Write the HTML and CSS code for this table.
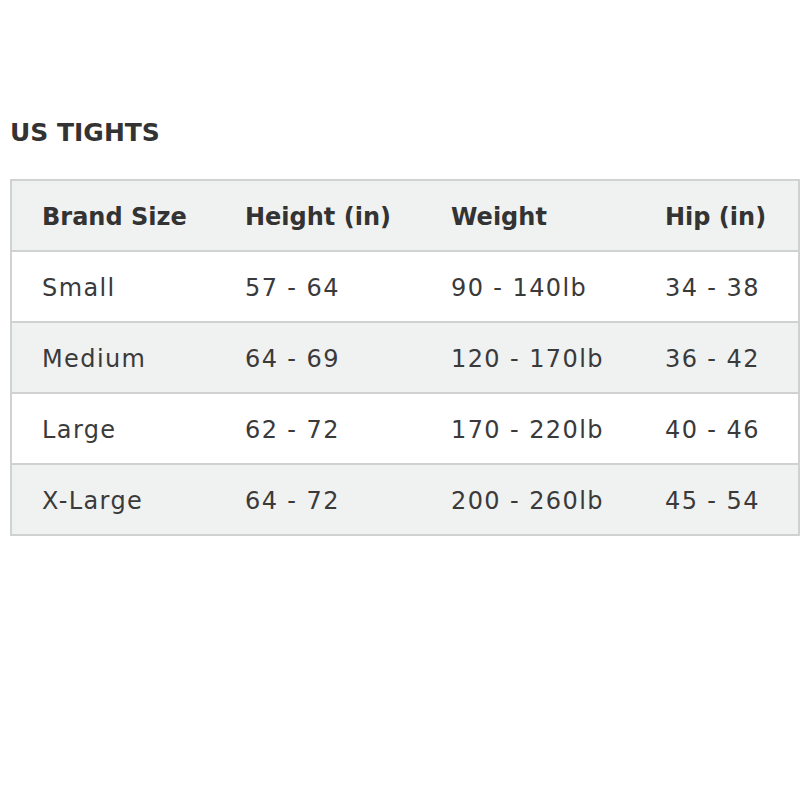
FILE: index.html
```html
<!DOCTYPE html>
<html>
<head>
<meta charset="utf-8">
<link rel="stylesheet" href="styles.css">
</head>
<body>
<div class="wrap">
  <h2 class="title">US TIGHTS</h2>
  <table class="chart">
    <colgroup>
      <col class="c1"><col class="c2"><col class="c3"><col class="c4">
    </colgroup>
    <thead>
      <tr class="alt"><th>Brand Size</th><th>Height (in)</th><th>Weight</th><th>Hip (in)</th></tr>
    </thead>
    <tbody>
      <tr><td>Small</td><td>57 - 64</td><td>90 - 140lb</td><td>34 - 38</td></tr>
      <tr class="alt"><td>Medium</td><td>64 - 69</td><td>120 - 170lb</td><td>36 - 42</td></tr>
      <tr><td>Large</td><td>62 - 72</td><td>170 - 220lb</td><td>40 - 46</td></tr>
      <tr class="alt"><td>X-Large</td><td>64 - 72</td><td>200 - 260lb</td><td>45 - 54</td></tr>
    </tbody>
  </table>
</div>
</body>
</html>
```
FILE: styles.css
```css
html, body {
  margin: 0;
  padding: 0;
  background: #ffffff;
}
body {
  font-family: "DejaVu Sans", "Noto Sans", sans-serif;
  color: #333333;
}
.wrap {
  padding: 115px 2px 0 10px;
}
.title {
  margin: 0 0 28px 0;
  font-size: 25px;
  font-weight: 700;
  line-height: 36px;
  color: #333333;
}
.chart {
  border-collapse: collapse;
  table-layout: fixed;
  width: 788px;
  border: 2px solid #d0d2d2;
}
.c1 { width: 204px; }
.c2 { width: 206px; }
.c3 { width: 214px; }
.c4 { width: 164px; }
.chart th, .chart td {
  height: 66px;
  padding: 3px 0 0 30px;
  text-align: left;
  vertical-align: middle;
  font-size: 24px;
  white-space: nowrap;
  border-top: 2px solid #d0d2d2;
}
.chart th {
  font-weight: 700;
  border-top: none;
}
.chart td {
  font-weight: 400;
  letter-spacing: 1.4px;
  color: #3a3a3a;
}
.alt {
  background: #f0f1f1;
}
```
